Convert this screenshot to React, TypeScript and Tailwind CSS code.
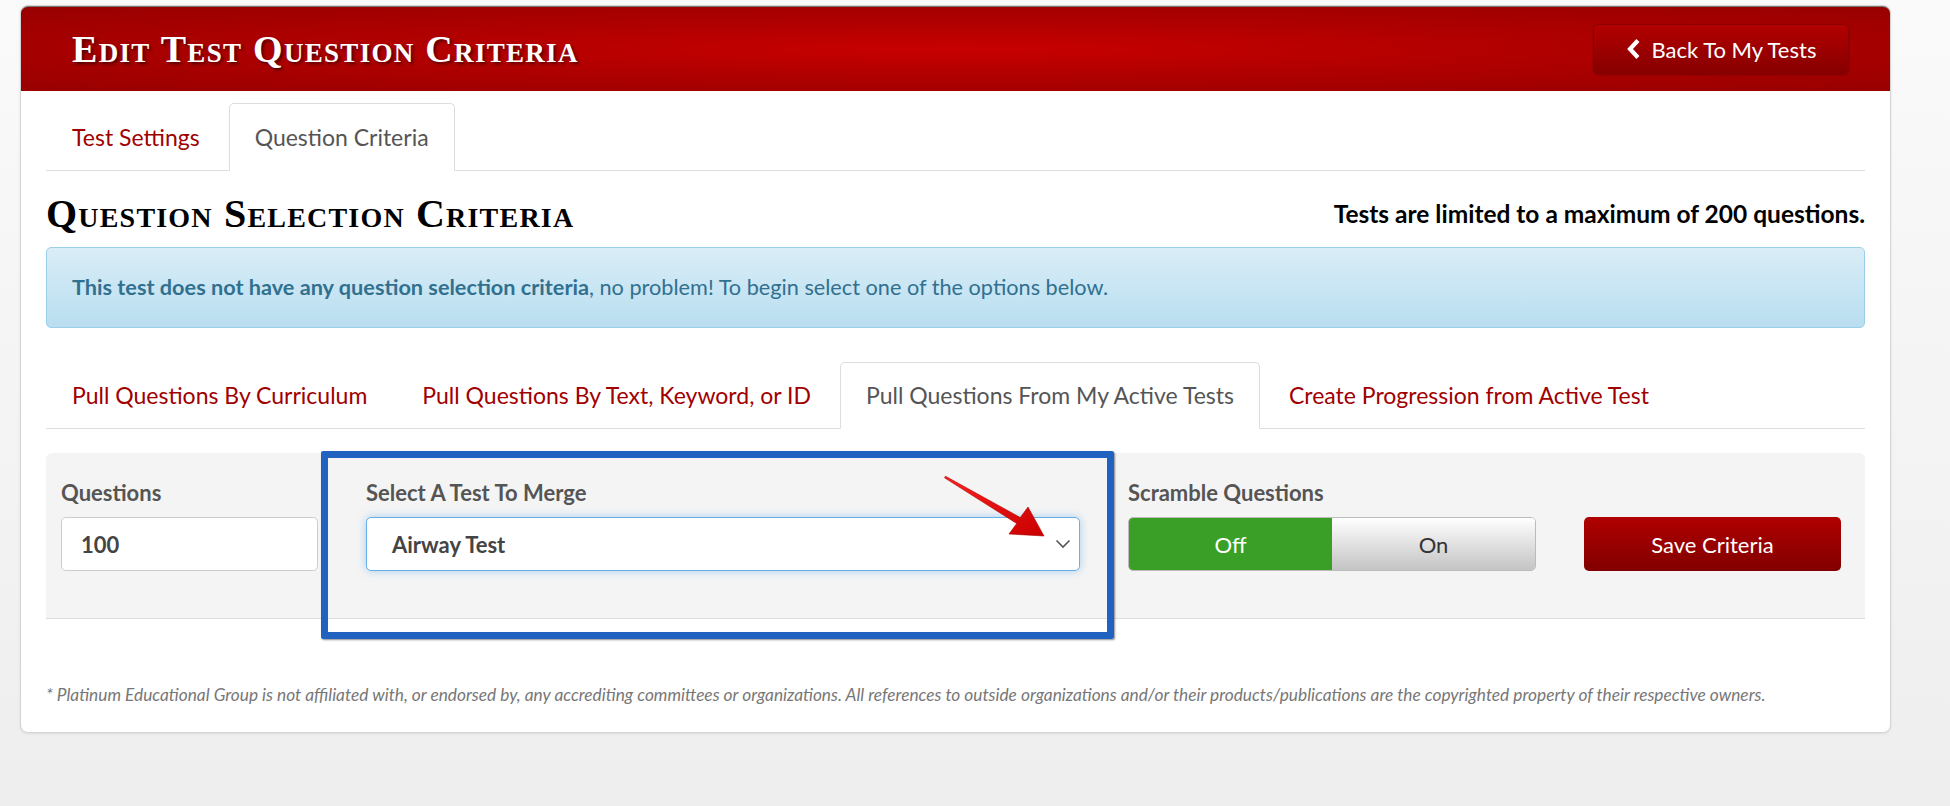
import React from 'react';

const sans = { fontFamily: 'Lato, "Open Sans", sans-serif' };
const serif = { fontFamily: '"Liberation Serif", "DejaVu Serif", serif' };

const TopTab = ({ label, active }: { label: string; active?: boolean }) => (
    <div
        className={`h-[68px] px-[25px] mr-[3px] flex items-center text-[23px] rounded-t-[5px] border -mb-px ${active ? 'bg-white border-[#dddddd] border-b-white text-[#555555]' : 'border-transparent text-[#a00000]'}`}
    >
        {label}
    </div>
);

const ChevronLeft = () => (
    <svg width="14" height="20" viewBox="0 0 14 20" className="mr-[12px]">
        <polyline points="10.5,3 4,10 10.5,17" fill="none" stroke="white" strokeWidth="4.2" strokeLinecap="square" />
    </svg>
);

export default function App() {
    const sourceTabs = [
        'Pull Questions By Curriculum',
        'Pull Questions By Text, Keyword, or ID',
        'Pull Questions From My Active Tests',
        'Create Progression from Active Test',
    ];

    return (
        <div className="min-h-[806px] w-full bg-gradient-to-b from-[#fafafa] to-[#eeeeee] pt-[5px] pl-[20px]" style={sans}>
            <div className="w-[1871px] bg-white border border-[#d4d4d4] rounded-[8px] shadow-[0_1px_3px_rgba(0,0,0,0.08)]">
                {/* page header */}
                <header className="h-[85px] rounded-t-[7px] border-t border-[#777777] flex items-center justify-between pl-[51px] pr-[41px] bg-[radial-gradient(ellipse_at_center,#c80000_0%,#b00000_45%,#980000_100%)]">
                    <h1
                        className="text-white font-bold text-[38px] tracking-[1.3px] [font-variant-caps:small-caps] [text-shadow:2px_2px_3px_rgba(0,0,0,0.55)]"
                        style={serif}
                    >
                        Edit Test Question Criteria
                    </h1>
                    <button className="h-[50px] w-[256px] flex items-center justify-center rounded-[5px] border border-[#8a0000] bg-gradient-to-b from-[#b30000] to-[#870000] text-white text-[22px] shadow-[0_1px_2px_rgba(0,0,0,0.25)]">
                        <ChevronLeft />
                        Back To My Tests
                    </button>
                </header>

                <div className="px-[25px] pb-[27px]">
                    {/* top tabs */}
                    <nav className="mt-[12px] flex border-b border-[#dddddd]">
                        <TopTab label="Test Settings" />
                        <TopTab label="Question Criteria" active />
                    </nav>

                    <div className="mt-[23px] h-[40px] flex items-center justify-between">
                        <h2 className="text-black font-bold text-[40px] tracking-[1.2px] [font-variant-caps:small-caps]" style={serif}>
                            Question Selection Criteria
                        </h2>
                        <p className="text-black font-bold text-[24.5px]">Tests are limited to a maximum of 200 questions.</p>
                    </div>

                    <div className="mt-[13px] h-[81px] flex items-center px-[25px] rounded-[5px] border border-[#9acfea] bg-gradient-to-b from-[#d9edf7] to-[#b9def0] text-[#31708f] text-[21.7px]">
                        <p>
                            <span className="font-bold">This test does not have any question selection criteria</span>, no problem! To begin select one of the options below.
                        </p>
                    </div>

                    {/* question source tabs */}
                    <nav className="mt-[34px] flex border-b border-[#dddddd]">
                        {sourceTabs.map((t, i) => (
                            <div
                                key={t}
                                className={`h-[67px] px-[25px] mr-[3px] flex items-center text-[23px] rounded-t-[5px] border -mb-px ${i === 2 ? 'bg-white border-[#dddddd] border-b-white text-[#555555]' : 'border-transparent text-[#a00000]'}`}
                            >
                                {t}
                            </div>
                        ))}
                    </nav>

                    {/* criteria form */}
                    <div className="relative mt-[24px] h-[166px] rounded-t-[6px] bg-[#f4f4f4] border-b border-[#dddddd] pl-[15px] pt-[27px] flex gap-[48px]">
                        <div className="w-[257px]">
                            <label className="block font-bold text-[22px] text-[#555555] h-[26px] leading-[26px]">Questions</label>
                            <div className="mt-[11px] h-[54px] rounded-[5px] border border-[#cccccc] bg-white flex items-center px-[19px] font-bold text-[22px] text-[#444444]">
                                100
                            </div>
                        </div>
                        <div className="w-[714px]">
                            <label className="block font-bold text-[22px] text-[#555555] h-[26px] leading-[26px]">Select A Test To Merge</label>
                            <div className="mt-[11px] h-[54px] rounded-[5px] border border-[#66afe9] bg-white shadow-[0_0_8px_rgba(102,175,233,0.55)] flex items-center justify-between pl-[25px] pr-[8px] font-bold text-[22px] text-[#444444]">
                                <span>Airway Test</span>
                                <svg width="16" height="10" viewBox="0 0 16 10">
                                    <polyline points="1.5,1.5 8,8 14.5,1.5" fill="none" stroke="#555555" strokeWidth="1.6" />
                                </svg>
                            </div>
                        </div>
                        <div className="w-[408px]">
                            <label className="block font-bold text-[22px] text-[#555555] h-[26px] leading-[26px]">Scramble Questions</label>
                            <div className="mt-[11px] h-[54px] flex rounded-[5px] overflow-hidden border border-[#bbbbbb] text-[22px]">
                                <div className="w-1/2 flex items-center justify-center bg-[#3a9f27] text-white">Off</div>
                                <div className="w-1/2 flex items-center justify-center bg-gradient-to-b from-[#ffffff] to-[#c4c4c4] text-[#333333]">On</div>
                            </div>
                        </div>
                        <div className="w-[257px] pt-[37px]">
                            <button className="w-full h-[54px] rounded-[5px] bg-gradient-to-b from-[#b00000] to-[#820000] text-white text-[22px]">
                                Save Criteria
                            </button>
                        </div>

                        {/* highlight frame and pointer */}
                        <div className="absolute left-[275px] top-[-2px] w-[793px] h-[188px] border-[7px] border-[#2162c0] rounded-[2px] shadow-[1px_1px_2px_rgba(0,0,0,0.45)] pointer-events-none" />
                        <svg className="absolute left-[894px] top-[17px] pointer-events-none" width="115" height="72" viewBox="0 0 115 72">
                            <defs>
                                <linearGradient id="arrowFill" x1="0" y1="0" x2="1" y2="1">
                                    <stop offset="0" stopColor="#ff2020" />
                                    <stop offset="1" stopColor="#c80000" />
                                </linearGradient>
                            </defs>
                            <polygon
                                points="5.5,6.2 80.3,47.5 88,37 104,66 69,64 76.7,53.5 4.5,7.8"
                                fill="url(#arrowFill)"
                                stroke="#b00000"
                                strokeWidth="0.6"
                                strokeLinejoin="round"
                            />
                        </svg>
                    </div>

                    <p className="mt-[66px] italic text-[17.3px] text-[#777777] leading-[20px]">
                        * Platinum Educational Group is not affiliated with, or endorsed by, any accrediting committees or organizations. All references to outside organizations and/or their products/publications are the copyrighted property of their respective owners.
                    </p>
                </div>
            </div>
        </div>
    );
}
